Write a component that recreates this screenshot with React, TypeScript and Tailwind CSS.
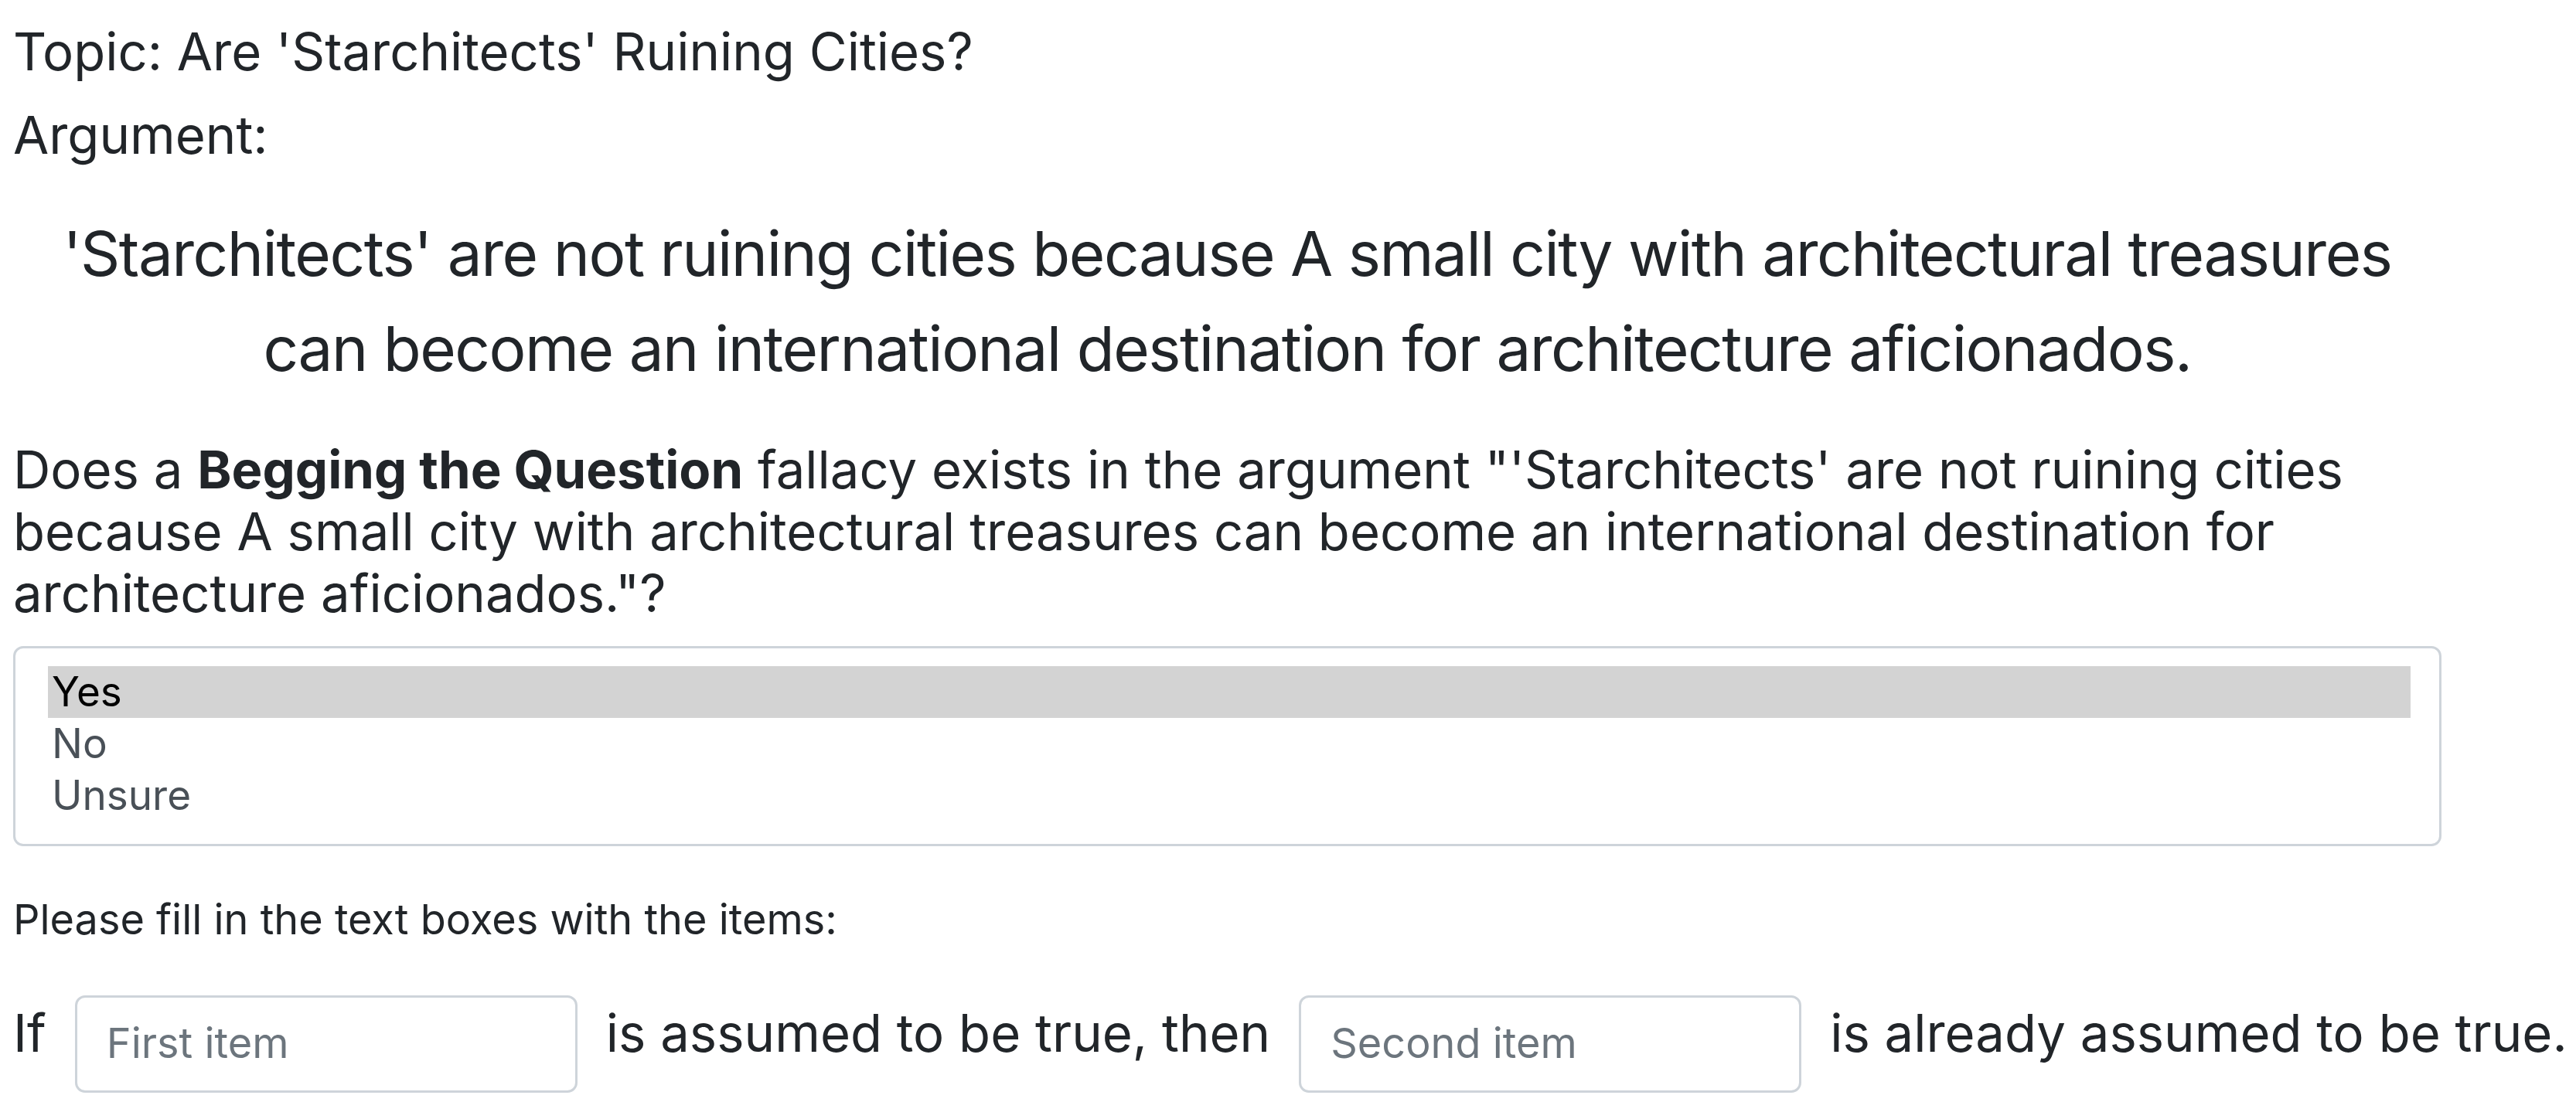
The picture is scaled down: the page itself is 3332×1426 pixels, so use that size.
import React from "react";

const options = ["Yes", "No", "Unsure"];

export default function App() {
  const argument =
    "'Starchitects' are not ruining cities because A small city with architectural treasures can become an international destination for architecture aficionados.";

  return (
    <div className="min-h-[1426px] w-[3332px] bg-white font-['Inter','Liberation_Sans',sans-serif] text-[#212529]">
      <div className="ml-[17px] w-[3141px] pt-[27px]">
        <div className="text-[67px] leading-[80px]">Topic: Are 'Starchitects' Ruining Cities?</div>
        <div className="mt-[28px] text-[67px] leading-[80px]">Argument:</div>

        <p className="mt-[51px] text-center text-[80px] leading-[123px] tracking-[-1.5px] whitespace-nowrap">
          'Starchitects' are not ruining cities because A small city with architectural treasures
          <br />
          can become an international destination for architecture aficionados.
        </p>

        <div className="mt-[56px] text-[67px] leading-[80px]">
          Does a <span className="font-bold">Begging the Question</span> fallacy exists in the argument "
          {argument}"?
        </div>

        <div className="mt-[28px] rounded-[13px] border-[3px] border-[#ced4da] pt-[23px] pr-[37px] pb-[29px] pl-[42px]">
          {options.map((o, i) => (
            <div
              key={o}
              className={
                i === 0
                  ? "h-[67px] bg-[#d3d3d3] px-[5px] text-[53px] leading-[67px] text-black"
                  : "h-[67px] px-[5px] text-[53px] leading-[67px] text-[#495057]"
              }
            >
              {o}
            </div>
          ))}
        </div>

        <div className="mt-[55px] text-[54px] leading-[80px]">Please fill in the text boxes with the items:</div>

        <div className="mt-[58px] flex items-center gap-[37px] whitespace-nowrap text-[67px] leading-[80px]">
          <span className="pb-[28px]">If</span>
          <input
            placeholder="First item"
            className="h-[126px] w-[650px] shrink-0 rounded-[13px] border-[3px] border-[#ced4da] pr-[40px] pl-[38px] pb-[4px] text-[54px] text-[#495057] outline-none placeholder:text-[#6c757d]"
          />
          <span className="pb-[28px]">is assumed to be true, then</span>
          <input
            placeholder="Second item"
            className="h-[126px] w-[650px] shrink-0 rounded-[13px] border-[3px] border-[#ced4da] pr-[40px] pl-[38px] pb-[4px] text-[54px] text-[#495057] outline-none placeholder:text-[#6c757d]"
          />
          <span className="pb-[28px]">is already assumed to be true.</span>
        </div>
      </div>
    </div>
  );
}
